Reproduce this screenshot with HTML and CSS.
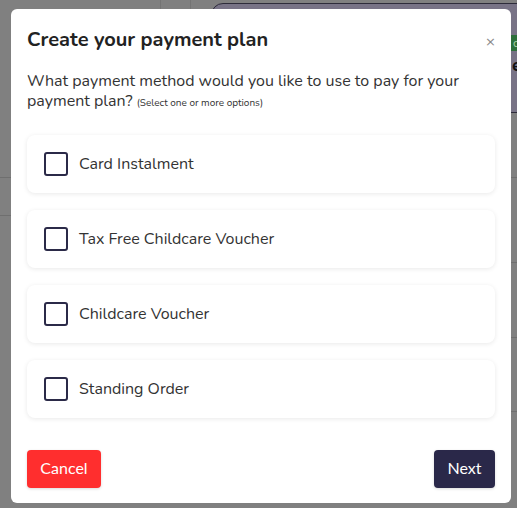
FILE: index.html
```html
<!DOCTYPE html>
<html lang="en">
<head>
<meta charset="utf-8">
<title>Create your payment plan</title>
<link rel="stylesheet" href="styles.css">
</head>
<body>
<div class="page">
  <div class="page-left">
    <div class="cols"><span class="col"></span><span class="col"></span></div>
    <div class="row-line first"></div>
    <div class="row-line second"></div>
  </div>
  <div class="page-right">
    <div class="panel">
      <span class="tag">c</span>
      <span class="panel-text">e</span>
    </div>
    <div class="row-line r1"></div>
    <div class="row-line r2"></div>
    <div class="row-line r3"></div>
    <div class="row-line r4"></div>
  </div>
</div>

<div class="modal" role="dialog" aria-labelledby="modal-title">
  <div class="modal-header">
    <h2 id="modal-title" class="modal-title">Create your payment plan</h2>
    <button class="close" type="button" aria-label="Close">&times;</button>
  </div>
  <p class="question">What payment method would you like to use to pay for your payment plan? <small class="hint">(Select one or more options)</small></p>
  <div class="options">
    <label class="option"><span class="box"></span><span class="option-label">Card Instalment</span></label>
    <label class="option"><span class="box"></span><span class="option-label">Tax Free Childcare Voucher</span></label>
    <label class="option"><span class="box"></span><span class="option-label">Childcare Voucher</span></label>
    <label class="option"><span class="box"></span><span class="option-label">Standing Order</span></label>
  </div>
  <div class="modal-footer">
    <button class="btn btn-cancel" type="button">Cancel</button>
    <button class="btn btn-next" type="button">Next</button>
  </div>
</div>
</body>
</html>
```

FILE: styles.css
```css
* { box-sizing: border-box; }

html, body {
  margin: 0;
  padding: 0;
}

body {
  width: 517px;
  height: 508px;
  overflow: hidden;
  background: #808080;
  font-family: "Nunito", "Open Sans", "Noto Sans", sans-serif;
  position: relative;
}

/* background page (dimmed) */
.page {
  display: flex;
  height: 508px;
}

.page-left {
  width: 211px;
  position: relative;
}

.cols {
  display: flex;
  height: 9px;
  padding-left: 160px;
  gap: 29px;
}

.col {
  width: 1px;
  background: #747474;
}

.row-line {
  height: 1px;
  background: #6f6f6f;
}

.page-left .first { margin-top: 168px; }
.page-left .second { margin-top: 37px; }

.page-right {
  flex: 1;
  padding-top: 3px;
}

.panel {
  height: 110px;
  margin-right: -20px;
  background: #787386;
  border: 1px solid #2d2b3a;
  border-radius: 12px;
  position: relative;
  overflow: hidden;
}

.tag {
  position: absolute;
  left: 299px;
  top: 31px;
  width: 30px;
  height: 16px;
  background: #2d6f3a;
  color: #a7d2a7;
  font-size: 12px;
  line-height: 16px;
  padding-left: 2px;
}

.panel-text {
  position: absolute;
  left: 300px;
  top: 49px;
  font-size: 18px;
  font-weight: 700;
  color: #111;
}

.page-right .r1 { margin-top: 64px; }
.page-right .r2 { margin-top: 84px; }
.page-right .r3 { margin-top: 74px; }
.page-right .r4 { margin-top: 73px; }

/* modal */
.modal {
  position: absolute;
  left: 11px;
  top: 9px;
  width: 500px;
  height: 494px;
  background: #fff;
  border-radius: 6px;
  padding: 0 16px;
  display: flex;
  flex-direction: column;
}

.modal-header {
  display: flex;
  align-items: center;
  justify-content: space-between;
  padding-top: 18px;
}

.modal-title {
  margin: 0;
  font-size: 20px;
  line-height: 26px;
  font-weight: 700;
  color: #222;
}

.close {
  border: 0;
  background: none;
  padding: 0;
  font-family: "DejaVu Sans", sans-serif;
  font-size: 13px;
  line-height: 14px;
  color: #8a8a8a;
  margin-right: -1px;
  margin-top: 3px;
}

.question {
  margin: 18px 0 0;
  font-size: 16px;
  line-height: 20px;
  color: #333;
}

.hint {
  font-size: 10px;
  line-height: 1;
  color: #333;
}

.options {
  margin-top: 24px;
  display: flex;
  flex-direction: column;
  gap: 17px;
}

.option {
  display: flex;
  align-items: center;
  height: 58px;
  padding-left: 17px;
  gap: 11px;
  background: #fff;
  border-radius: 8px;
  box-shadow: 0 1px 5px rgba(0, 0, 0, 0.09);
}

.box {
  width: 24px;
  height: 24px;
  border: 2px solid #2b2a48;
  border-radius: 3px;
  flex: none;
}

.option-label {
  font-size: 16px;
  color: #333;
}

.modal-footer {
  margin-top: auto;
  margin-bottom: 15px;
  display: flex;
  justify-content: space-between;
}

.btn {
  height: 38px;
  border: 0;
  border-radius: 4px;
  font-family: "Lato", sans-serif;
  font-size: 16px;
  color: #fff;
  padding: 0 12px 3px;
  box-shadow: 0 1px 3px rgba(0, 0, 0, 0.15);
}

.btn-cancel {
  width: 74px;
  background: #ff2e2e;
}

.btn-next {
  width: 61px;
  background: #2a2849;
}
```
